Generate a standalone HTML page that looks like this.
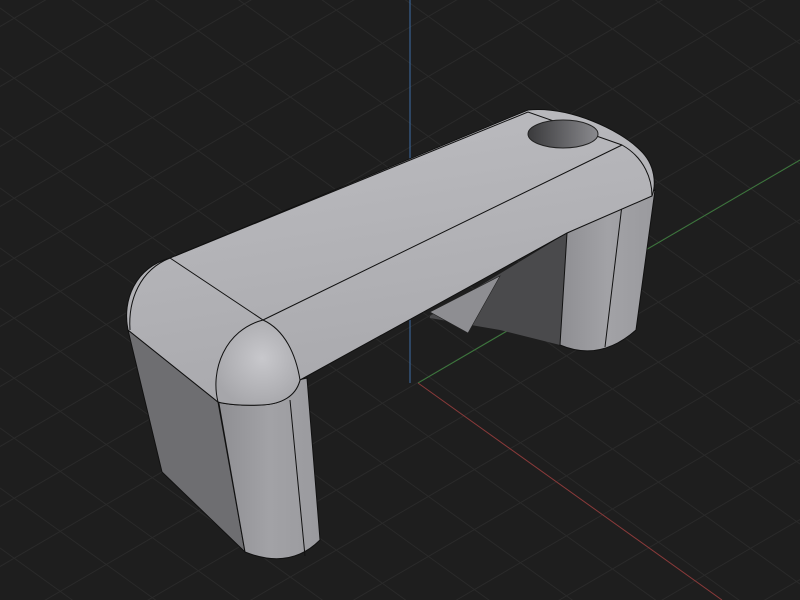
<!DOCTYPE html><html><head><style>html,body{margin:0;padding:0;background:#1e1e1e;overflow:hidden;width:800px;height:600px}svg{display:block}</style></head><body>
<svg width="800" height="600" viewBox="0 0 800 600" xmlns="http://www.w3.org/2000/svg">
<defs>
<linearGradient id="bar" x1="0" y1="0" x2="0.3" y2="1"><stop offset="0" stop-color="#bdbdc1"/><stop offset="1" stop-color="#a9a9ad"/></linearGradient>
<radialGradient id="cap" cx="0.55" cy="0.45" r="0.6"><stop offset="0" stop-color="#c8c8cc"/><stop offset="1" stop-color="#a6a6aa"/></radialGradient>
<linearGradient id="legf" x1="0" y1="0" x2="1" y2="0"><stop offset="0" stop-color="#8e8e92"/><stop offset="0.5" stop-color="#a2a2a6"/><stop offset="1" stop-color="#9a9a9e"/></linearGradient>
<linearGradient id="hole" x1="0" y1="0" x2="1" y2="0"><stop offset="0" stop-color="#3a3a3c"/><stop offset="1" stop-color="#8a8a8e"/></linearGradient>
</defs>
<rect width="800" height="600" fill="#1e1e1e"/>
<g stroke="#2a2a2a" stroke-width="1">
<path d="M-400,200 L1200,-734 M-400,260 L1200,-674 M-400,320 L1200,-614 M-400,380 L1200,-554 M-400,440 L1200,-494 M-400,500 L1200,-434 M-400,560 L1200,-374 M-400,620 L1200,-314 M-400,680 L1200,-254 M-400,740 L1200,-194 M-400,800 L1200,-134 M-400,860 L1200,-74 M-400,920 L1200,-14 M-400,980 L1200,46 M-400,1040 L1200,106 M-400,1100 L1200,166 M-400,1160 L1200,226 M-400,1220 L1200,286 M-400,1280 L1200,346 M-400,1340 L1200,406 M-400,1400 L1200,466 M-400,1460 L1200,526 M-400,1520 L1200,586 M-400,1580 L1200,646 M-400,1640 L1200,706 M-400,1700 L1200,766"/>
<path d="M-400,-700 L1200,452 M-400,-640 L1200,512 M-400,-580 L1200,572 M-400,-520 L1200,632 M-400,-460 L1200,692 M-400,-400 L1200,752 M-400,-340 L1200,812 M-400,-280 L1200,872 M-400,-220 L1200,932 M-400,-160 L1200,992 M-400,-100 L1200,1052 M-400,-40 L1200,1112 M-400,20 L1200,1172 M-400,80 L1200,1232 M-400,140 L1200,1292 M-400,200 L1200,1352 M-400,260 L1200,1412 M-400,320 L1200,1472 M-400,380 L1200,1532 M-400,-760 L1200,392 M-400,-820 L1200,332 M-400,-880 L1200,272 M-400,-940 L1200,212"/>
</g>
<line x1="418" y1="383" x2="800" y2="160" stroke="#3d7a3d" stroke-width="1"/>
<line x1="418" y1="383" x2="722" y2="600" stroke="#8a3a3a" stroke-width="1"/>
<line x1="410" y1="0" x2="410" y2="383" stroke="#3d6fa8" stroke-width="1"/>
<polygon points="430,316 567,233 560,345 500,330 430,318" fill="#4a4a4c"/>
<polygon points="430,312 500,276 468,333" fill="#8e8e92" stroke="#222" stroke-width="0.6"/>
<path d="M567,233 L655,190 L636,330 Q600,362 560,345 Z" fill="url(#legf)" stroke="#111" stroke-width="1"/>
<line x1="622" y1="205" x2="605" y2="347" stroke="#111" stroke-width="1"/>
<path d="M128,330 L218,402 L245,552 L162,472 Z" fill="#6e6e71" stroke="#111" stroke-width="1"/>
<path d="M218,398 L307,378 L320,540 Q290,570 245,552 Z" fill="url(#legf)" stroke="#111" stroke-width="1"/>
<line x1="290" y1="400" x2="305" y2="556" stroke="#111"/>
<path d="M128,330 C122,300 135,268 170,258 L528,110 C570,106 620,130 640,150 C656,165 656,185 652,196 L567,233 L300,380 C296,396 282,404 262,405 C240,406 225,404 218,402 Z" fill="url(#bar)" stroke="#111" stroke-width="1"/>
<path d="M218,402 C210,370 225,330 263,320 C285,330 296,355 300,380 C296,396 282,404 262,405 C240,406 225,404 218,402 Z" fill="url(#cap)" stroke="#111"/>
<path d="M170,258 L263,320 L622,145" fill="none" stroke="#111"/>
<path d="M170,258 C140,270 128,300 130,330" fill="none" stroke="#111"/>
<path d="M175,256 L528,112 L622,145 C645,158 652,180 652,196" fill="none" stroke="#111"/>
<ellipse cx="563" cy="134" rx="35" ry="14" fill="url(#hole)" stroke="#222"/>
</svg>
</body></html>
